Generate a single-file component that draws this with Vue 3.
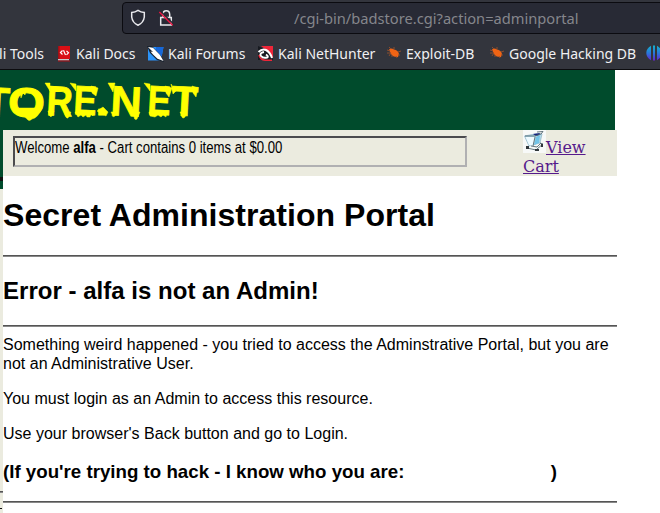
<script setup>
const letters = [
  { c: 'T', x: -17, y: 116, s: 42, w: 26, r: 3 },
  { c: 'O', x: 8, y: 116.5, s: 42, w: 37, r: 0 },
  { c: 'R', x: 46, y: 115, s: 42, w: 26, r: 3 },
  { c: 'E', x: 73, y: 114, s: 41, w: 23, r: 3 },
  { c: 'N', x: 110, y: 115, s: 42, w: 31, r: 3 },
  { c: 'E', x: 147, y: 114, s: 41, w: 23, r: 3 },
  { c: 'T', x: 171, y: 115, s: 42, w: 26, r: 3 }
]
</script>

<template>
  <div class="window">
    <header class="chrome">
      <div class="urlbar">
        <svg class="shield" width="16" height="18" viewBox="0 0 16 18"><path d="M8 1.3 Q10.8 3.2 14.3 3.5 V8 Q13.6 13.7 8 16.2 Q2.4 13.7 1.7 8 V3.5 Q5.2 3.2 8 1.3Z" /></svg>
        <svg class="lock" width="16" height="18" viewBox="0 0 16 18">
          <path d="M2.7 8.5H13.3V16H2.7ZM5 8V5.5Q5 1.8 8.3 1.8T11.7 5.5V8" />
          <path class="gap" d="M2.5 2L15.5 15" />
          <path class="slash" d="M1.3 3L14.7 16.3" />
        </svg>
        <span class="url">/cgi-bin/badstore.cgi?action=adminportal</span>
      </div>
      <nav class="bookmarks">
        <span class="bm tools"><span class="t">Kali Tools</span></span>
        <span class="bm docs">
          <svg width="14" height="17" viewBox="0 0 14 17"><path fill="#d90f15" d="M1 1H13V14H1Z" /><path fill="#9f1116" d="M1 1H2.5V14H1Z" /><path fill="#c9c9cc" d="M1 14H12V15.5H1Z" /><path fill="#b30e14" d="M1 15.5H13V16.5H1Z" /><path fill="none" stroke="#fff" stroke-width="1.2" d="M5.5 5.5L3.5 7.5L5.5 9.5M9.5 5.8L11.5 7.8L9.5 9.8M6.5 5.3L8.5 10" /></svg>
          <span class="t">Kali Docs</span>
        </span>
        <span class="bm forums">
          <svg width="17" height="17" viewBox="0 0 17 17"><path fill="#2c94fa" d="M1 2H16.5L14 15.5H1Z" /><path fill="#1767d8" d="M9 2H16.5L14 15L8 8Z" /><path fill="#17222f" d="M0 1L5 1L15 12L17 17L10 15L3 8Z" /><path fill="#fff" d="M1 2L6 2.8L13 10L16.5 16L10.5 13.8L6 9.5L3.5 6.5L6 7Z" /></svg>
          <span class="t">Kali Forums</span>
        </span>
        <span class="bm hunter">
          <svg width="17" height="17" viewBox="0 0 17 17"><path fill="#171a20" d="M1 1L8 4L14 8L16 15H1V10Z" /><path fill="#ee2639" d="M4 1H16V13L13 9L8 4Z" /><path fill="none" stroke="#ee2639" stroke-width="1.5" d="M2 10Q3 14.5 8 15.2H15" /><path fill="none" stroke="#fff" stroke-width="2" d="M1.5 7Q5 3.5 9 5Q13 7 15 13M7 7Q2 8 4 11Q6 13.5 10 12.5Q12 11.5 9 9.5" /></svg>
          <span class="t">Kali NetHunter</span>
        </span>
        <span v-for="name in ['Exploit-DB', 'Google Hacking DB']" :key="name" class="bm">
          <svg width="16" height="14" viewBox="0 0 16 14"><path fill="#f06414" d="M3 3.5Q5 1.5 8 3.5Q12 4 13 8L12 11Q7 11.5 5 8Z" /><path fill="none" stroke="#94502d" stroke-width=".9" d="M1 7H5L3 10M5 3L3 1M8 3L8 1M12 6L15 5M12 9H14M10 10L11 12M6 9L6 11M4 5L1 4" /></svg>
          <span class="t">{{ name }}</span>
        </span>
        <span class="bm offsec">
          <svg width="16" height="16" viewBox="0 0 16 16"><defs><linearGradient id="offsec-fill" x2="0" y2="1"><stop stop-color="#15b3cc" /><stop offset=".5" stop-color="#2878db" /><stop offset="1" stop-color="#6523cf" /></linearGradient></defs><path fill="url(#offsec-fill)" d="M5 .8V15.2Q.3 12.5 .3 8T5 .8ZM7 .5H9V15.5H7ZM11 .8Q15.7 3.5 15.7 8T11 15.2Z" /></svg>
        </span>
      </nav>
    </header>

    <div class="banner">
      <svg width="210" height="60" viewBox="0 70 210 60">
        <g class="logo">
          <text v-for="(l, i) in letters" :key="i" :x="l.x" :y="l.y" :font-size="l.s" :textLength="l.w" lengthAdjust="spacingAndGlyphs" :transform="`rotate(${l.r} ${l.x} ${l.y})`">{{ l.c }}</text>
          <text class="dot" x="96" y="115" font-size="38">.</text>
          <path class="drips" d="M13 108L18 114Q24 115 27 119Q29 122 32 119Q38 118 42 108ZM20 92L21 98L23 93L25 95L26 91ZM48 111H54L52 116Q50 118 49 114ZM65 112H71L68 118Q66 119 65 114ZM75 112H94L93 116L91 114L90 117H87L86 115L83 117L81 115L78 117ZM111 112H117L115 116Q112 118 112 114ZM133 112H140L137 119Q134 121 134 115ZM149 112H167L166 117L163 115L161 117L158 115L155 117L150 116ZM180 112H187L185 117Q182 120 181 114ZM192 86L198 88L196 97L193 93ZM171 84L176 91L173 94ZM91 86L98 88L96 96L92 93ZM165 86L172 88L169 97L166 93ZM45 83L50 83L50 91ZM70 83L76 84L76 91ZM108 83L115 83L113 92ZM144 83L150 84L150 91ZM97 111L103 107L108 112L106 116L102 114Z" />
        </g>
      </svg>
    </div>

    <div class="body">
      <aside class="side"><div class="side-green"><i></i></div><div class="side-beige"><hr><i></i></div></aside>
      <main class="main">
        <div class="statusbar">
          <div class="welcome"><span>Welcome <b>alfa</b> - Cart contains 0 items at $0.00</span></div>
          <a class="cart"><svg width="23" height="23" viewBox="0 0 23 23"><path fill="#f7f9f8" d="M0 0H23V23H0Z" /><path fill="#b4dae9" stroke="#8bb3c6" stroke-width=".7" d="M1.5 6L12 4L19 4L17 13L6 16Z" /><path fill="#eefaff" d="M2.5 7L12 7L10 16L6 15Z" /><path fill="#72c4e8" d="M13 7L17 5L16 13L11 15Z" /><path fill="#12217c" d="M10 4L17 3L16 5L13 6Z" /><path fill="none" stroke="#53666f" stroke-width=".9" d="M2 6L12 6L18 4L20 1.5L14 2M5 16L4 18L13 20M17 13L20 14L14 19M12 7L10 16M8 16L14 17L18 13" /><path fill="#30373b" d="M3 16H6V19H3ZM12 19H16V21H12ZM18 14H20V17H18Z" /></svg><span>View Cart</span></a>
        </div>
        <h1>Secret Administration Portal</h1>
        <hr>
        <h2>Error - alfa is not an Admin!</h2>
        <hr>
        <p class="first">Something weird happened - you tried to access the Adminstrative Portal, but you are<br>not an Administrative User.</p>
        <p>You must login as an Admin to access this resource.</p>
        <p>Use your browser's Back button and go to Login.</p>
        <h3><span>(If you're trying to hack - I know who you are:</span><span>)</span></h3>
        <hr>
      </main>
    </div>
  </div>
</template>

<style>
body { margin: 0; background: #fff; overflow: hidden; }
</style>

<style scoped>
* { box-sizing: border-box; }
.window { width: 660px; height: 513px; overflow: hidden; color: #000; font-family: "Liberation Sans", sans-serif; }
.chrome { height: 70px; background: #33353d; border-bottom: 1px solid #0c0c0f; font-family: "Noto Sans", sans-serif; padding-top: 2px; }
.urlbar { margin-left: 122px; width: 560px; height: 32px; border: 1px solid #0b0b10; border-radius: 4px; background: #282a35; display: flex; align-items: center; padding-left: 7px; }
.urlbar svg { fill: none; stroke: #e9e9ed; stroke-width: 1.5; flex: none; }
.lock { margin-left: 12px; }
.lock .gap { stroke: #282a35; stroke-width: 1.4; }
.lock .slash { stroke: #e91643; stroke-width: 1.4; }
.url { margin-left: 120px; color: #85868c; font-size: 14.67px; line-height: 20px; white-space: nowrap; }
.bookmarks { height: 35px; display: grid; grid-template-columns: 57px 90px 110px 129px 103px 157px 20px; color: #f0f0f2; font-size: 14px; }
.bm { display: flex; align-items: center; white-space: nowrap; min-width: 0; height: 38px; }
.bm svg { flex: none; }
.bm .t { margin-left: 4px; padding-top: 1px; }
.tools { justify-content: flex-end; padding-right: 13px; }
.docs .t { margin-left: 5px; }
.banner { width: 615px; height: 60px; background: #004b2c; }
.banner svg { display: block; }
.logo { fill: #ff0; stroke: #ff0; stroke-width: .8; font-family: "Liberation Sans", sans-serif; font-weight: bold; }
.drips { stroke-width: .5; }
.body { display: flex; height: 383px; }
.side { width: 3px; flex: none; display: flex; flex-direction: column; overflow: hidden; }
.side-green { background: #004b2c; height: 59px; padding-top: 47px; }
.side-green i { display: block; height: 4px; background: #111; }
.side-beige { background: #ebebdf; flex: 1; padding-top: 302px; }
.side-beige hr { margin: 0 0 15px; }
.side-beige i { display: block; width: 2px; height: 1px; background: #111; }
.main { width: 614px; }
.statusbar { height: 46px; background: #ebebdf; display: flex; padding-left: 10px; }
.welcome { width: 454px; height: 31px; margin-top: 6px; border: 2px solid; border-color: #4b4b4e #b0b0b2 #b0b0b2 #4b4b4e; font-size: 16px; line-height: 20px; white-space: nowrap; }
.welcome span { display: block; width: max-content; transform: scaleX(.822); transform-origin: left; }
.cart { margin-left: 56px; width: 70px; font: 16px/19px "DejaVu Serif", serif; color: #551a8b; text-decoration: underline; }
.cart svg { vertical-align: baseline; }
hr { border: 0; border-top: 1px solid #555; border-bottom: 1px solid #888; height: 2px; margin: 0; }
h1, h2, h3, p { margin: 0; white-space: nowrap; }
h1 { font-size: 32px; line-height: 37px; padding: 21px 0; letter-spacing: .04px; }
h2 { font-size: 24px; line-height: 28px; padding: 20px 0; letter-spacing: .02px; }
p { font-size: 16px; line-height: 19px; margin-bottom: 16px; letter-spacing: .01px; }
.first { padding-top: 8px; }
h3 { font-size: 18.72px; line-height: 22px; padding: 2px 0 18px; display: flex; justify-content: space-between; width: 554px; }
</style>
